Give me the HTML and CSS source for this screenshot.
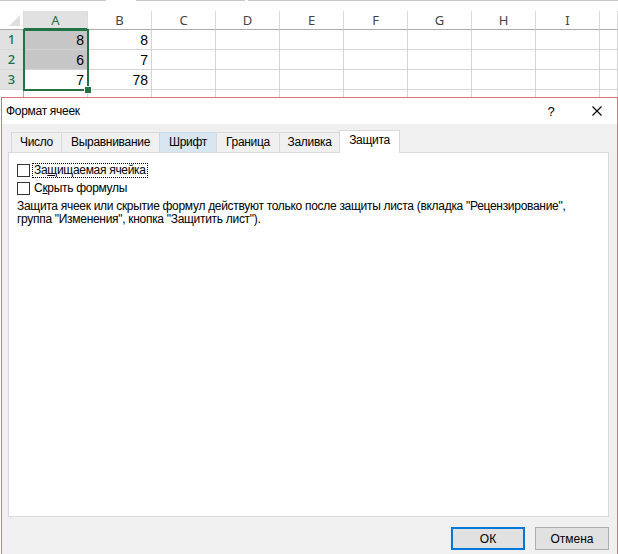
FILE: index.html
```html
<!DOCTYPE html>
<html lang="ru">

<head>
    <meta charset="UTF-8">
    <title>Формат ячеек</title>
    <link rel="stylesheet" href="styles.css">
</head>

<body>
    <div class="topStrip">
        <span class="seg seg1"></span>
        <span class="seg seg2"></span>
        <span class="seg seg3"></span>
    </div>

    <div class="sheet">
        <div class="corner"><span class="tri"></span></div>
        <div class="colHead selHead">A</div>
        <div class="colHead">B</div>
        <div class="colHead">C</div>
        <div class="colHead">D</div>
        <div class="colHead">E</div>
        <div class="colHead">F</div>
        <div class="colHead">G</div>
        <div class="colHead">H</div>
        <div class="colHead">I</div>
        <div class="colHead"></div>

        <div class="rowHead selRow">1</div>
        <div class="cell filled">8</div>
        <div class="cell">8</div>
        <div class="cell"></div><div class="cell"></div><div class="cell"></div><div class="cell"></div>
        <div class="cell"></div><div class="cell"></div><div class="cell"></div><div class="cell"></div>

        <div class="rowHead selRow">2</div>
        <div class="cell filled">6</div>
        <div class="cell">7</div>
        <div class="cell"></div><div class="cell"></div><div class="cell"></div><div class="cell"></div>
        <div class="cell"></div><div class="cell"></div><div class="cell"></div><div class="cell"></div>

        <div class="rowHead selRow">3</div>
        <div class="cell">7</div>
        <div class="cell">78</div>
        <div class="cell"></div><div class="cell"></div><div class="cell"></div><div class="cell"></div>
        <div class="cell"></div><div class="cell"></div><div class="cell"></div><div class="cell"></div>

        <!-- row 4 is hidden under the dialog -->
        <div class="rowHead"></div>
        <div class="cell"></div><div class="cell"></div><div class="cell"></div><div class="cell"></div><div class="cell"></div>
        <div class="cell"></div><div class="cell"></div><div class="cell"></div><div class="cell"></div><div class="cell"></div>
    </div>

    <!-- selection frame over A1:A3 -->
    <div class="selection"><span class="handle"></span></div>

    <div class="dialog">
        <div class="titleBar">
            <span class="title">Формат ячеек</span>
            <span class="help">?</span>
            <span class="close">
                <svg width="10" height="10" viewBox="0 0 10 10">
                    <path d="M0.5 0.5 L9.5 9.5 M9.5 0.5 L0.5 9.5" stroke="#000" stroke-width="1.1" fill="none" />
                </svg>
            </span>
        </div>

        <div class="dlgBody">
            <ul class="tabs">
                <li class="tab t1">Число</li>
                <li class="tab t2">Выравнивание</li>
                <li class="tab t3 hover">Шрифт</li>
                <li class="tab t4">Граница</li>
                <li class="tab t5">Заливка</li>
                <li class="tab t6 active">Защита</li>
            </ul>

            <div class="panel">
                <div class="checkRow">
                    <span class="box"></span>
                    <span class="label focused">За<u>щ</u>ищаемая ячейка</span>
                </div>
                <div class="checkRow">
                    <span class="box"></span>
                    <span class="label">С<u>к</u>рыть формулы</span>
                </div>
                <p class="note">Защита ячеек или скрытие формул действуют только после защиты листа (вкладка "Рецензирование",<br>группа "Изменения", кнопка "Защитить лист").</p>
            </div>

            <div class="buttons">
                <button class="btn default">ОК</button>
                <button class="btn">Отмена</button>
            </div>
        </div>
    </div>
</body>

</html>
```

FILE: styles.css
```css
body {
    margin: 0;
    width: 618px;
    height: 554px;
    overflow: hidden;
    position: relative;
    background-color: white;
    font-family: "Liberation Sans", Arial, sans-serif;
}

/* spreadsheet behind the dialog */
.topStrip {
    height: 11px;
    position: relative;
}

.seg {
    position: absolute;
    top: 0;
    height: 1px;
    background-color: #c6c6c6;
}

.seg1 { left: 0; width: 106px; }
.seg2 { left: 136px; width: 109px; }
.seg3 { left: 248px; width: 370px; }

.sheet {
    display: grid;
    grid-template-columns: 24px repeat(9, 64px) 18px;
    grid-template-rows: 19px repeat(4, 20px);
}

.sheet > div {
    box-sizing: border-box;
}

.corner {
    position: relative;
    border-right: 1px solid #dadada;
    border-bottom: 1px solid #ababab;
}

.tri {
    position: absolute;
    right: 3px;
    bottom: 3px;
    width: 0;
    height: 0;
    border-left: 11px solid transparent;
    border-bottom: 11px solid #dfdfdf;
}

.colHead {
    border-right: 1px solid #dadada;
    border-bottom: 1px solid #ababab;
    text-align: center;
    font-family: "Noto Sans", sans-serif;
    font-size: 13px;
    line-height: 18px;
    color: #444;
}

.selHead {
    background-color: #e1e1e1;
    color: #217346;
    border-bottom: 2px solid #217346;
}

.rowHead {
    border-right: 1px solid #ababab;
    border-bottom: 1px solid #dadada;
    text-align: center;
    font-family: "Noto Sans", sans-serif;
    font-size: 13px;
    font-weight: 500;
    line-height: 19px;
    color: #444;
}

.selRow {
    background-color: #e1e1e1;
    color: #217346;
}

.cell {
    border-right: 1px solid #d4d4d4;
    border-bottom: 1px solid #d4d4d4;
    text-align: right;
    padding-right: 3px;
    font-size: 14px;
    line-height: 20px;
    color: #000;
}

.filled {
    background-color: #c6c6c6;
}

.selection {
    position: absolute;
    left: 23px;
    top: 29px;
    width: 62px;
    height: 58px;
    border: 2px solid #217346;
}

.handle {
    position: absolute;
    right: -5px;
    bottom: -5px;
    width: 6px;
    height: 6px;
    background-color: #217346;
    border: 1px solid white;
}

/* dialog window */
.dialog {
    position: absolute;
    left: 1px;
    top: 97px;
    width: 615px;
    height: 460px;
    border: 1px solid #e2707d;
    background-color: #f0f0f0;
    font-size: 12px;
    letter-spacing: -0.3px;
    color: #000;
}

.titleBar {
    height: 26px;
    background-color: white;
    display: flex;
    align-items: center;
    padding-left: 4px;
}

.title {
    flex: 1;
}

.help {
    width: 30px;
    font-size: 13px;
    text-align: center;
    margin-right: 16px;
}

.close {
    width: 30px;
    height: 10px;
    display: flex;
    justify-content: center;
    margin-right: 5px;
}

.dlgBody {
    padding: 6px 8px 0 6px;
}

.tabs {
    list-style-type: none;
    margin: 0 0 0 3px;
    padding: 0;
    display: flex;
    align-items: flex-end;
    height: 22px;
}

.tab {
    box-sizing: border-box;
    height: 20px;
    line-height: 18px;
    text-align: center;
    border: 1px solid #d9d9d9;
    border-bottom: none;
    margin-right: -1px;
    background-color: #f0f0f0;
    white-space: nowrap;
}

.t1 { width: 51px; }
.t2 { width: 99px; }
.t3 { width: 58px; }
.t4 { width: 64px; }
.t5 { width: 61px; }
.t6 { width: 61px; }

.tab.hover {
    background-color: #d8e6f2;
    border-color: #c5d9ec;
}

.tab.active {
    height: 23px;
    margin-bottom: -1px;
    background-color: white;
    position: relative;
    z-index: 1;
}

.panel {
    box-sizing: border-box;
    height: 365px;
    background-color: white;
    border: 1px solid #d9d9d9;
    padding: 10px 8px;
}

.checkRow {
    display: flex;
    align-items: center;
    height: 14px;
    margin-bottom: 4px;
}

.box {
    box-sizing: border-box;
    width: 13px;
    height: 13px;
    border: 1px solid #333;
    background-color: white;
    margin-right: 2px;
}

.label {
    padding: 0 1px;
    line-height: 13px;
    border: 1px dotted transparent;
    white-space: nowrap;
}

.label.focused {
    border-color: #000;
}

.note {
    margin: 5px 0 0 0;
    line-height: 13px;
    white-space: nowrap;
}

.buttons {
    display: flex;
    justify-content: flex-end;
    gap: 10px;
    margin-top: 10px;
}

.btn {
    box-sizing: border-box;
    width: 74px;
    height: 23px;
    border: 1px solid #adadad;
    background-color: #e1e1e1;
    font-family: "Liberation Sans", Arial, sans-serif;
    font-size: 12px;
    color: #000;
    padding: 0;
}

.btn.default {
    border: 2px solid #0078d7;
}
```
